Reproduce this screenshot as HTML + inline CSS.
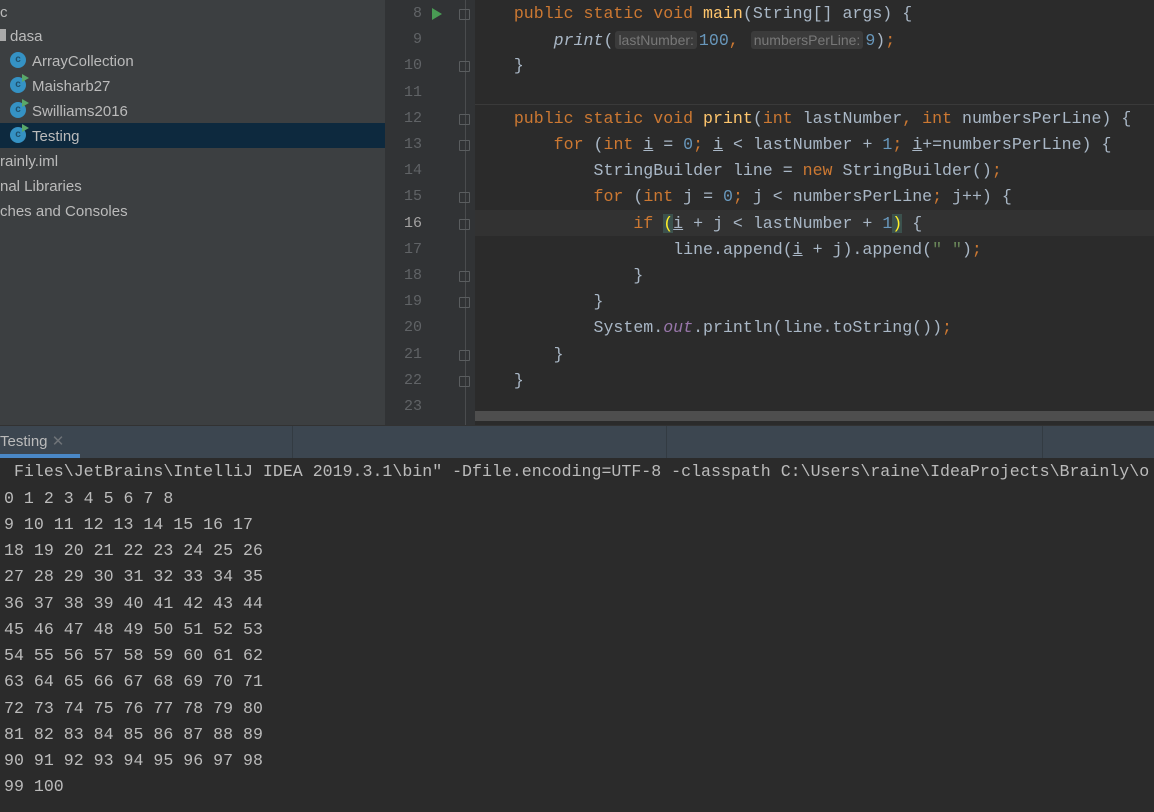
<!DOCTYPE html>
<html><head><meta charset="utf-8"><style>
*{margin:0;padding:0;box-sizing:border-box}
body{width:1154px;height:812px;overflow:hidden;background:#2b2b2b;position:relative;font-family:"Liberation Sans",sans-serif}
#side{position:absolute;left:0;top:0;width:385px;height:425px;background:#3c3f41;color:#bbbbbb;font-size:15px}
.si{position:absolute;height:25px;line-height:25px;white-space:nowrap}
.ci{display:inline-block;width:16px;height:16px;border-radius:50%;background:#3592c4;color:#1f4f6b;font-size:10px;font-weight:bold;text-align:center;line-height:16px;vertical-align:middle;margin-right:6px;position:relative;top:-2px}
.ci.r::after{content:"";position:absolute;right:-3px;top:-3px;border-left:7px solid #59a869;border-top:4px solid transparent;border-bottom:4px solid transparent}
#gut{position:absolute;left:385px;top:0;width:90px;height:425px;background:#313335}
#code{position:absolute;left:475px;top:0;width:679px;height:425px;background:#2b2b2b}
.ln{position:absolute;left:385px;width:37px;text-align:right;color:#606366;font-family:"Liberation Mono",monospace;font-size:15px;height:26px;line-height:26px}
.cl{position:absolute;left:474px;white-space:pre;font-family:"Liberation Mono",monospace;font-size:16.6px;color:#a9b7c6;height:26px;line-height:26px}
.k{color:#cc7832}.m{color:#ffc66d}.n{color:#6897bb}.s{color:#6a8759}.o{color:#9876aa;font-style:italic}.it{font-style:italic}
.h{font-family:"Liberation Sans",sans-serif;font-size:14px;color:#787878;background:#3b3b3b;border-radius:3px;padding:1px 3px;margin:0 2px}
.u{text-decoration:underline}
.fold{position:absolute;left:459px;width:11px;height:11px;border:1px solid #5a5d5f;border-radius:1px}
#tabs{position:absolute;left:0;top:425px;width:1154px;height:33px;background:#3c4650;border-top:1px solid #323232}
#con{position:absolute;left:0;top:458px;width:1154px;height:354px;background:#2b2b2b}
.cn{position:absolute;white-space:pre;font-family:"Liberation Mono",monospace;font-size:16.6px;color:#bbbbbb;height:26px;line-height:26px}
</style></head><body>
<div id="side">
<div class="si" style="left:0;top:0">c</div>
<div class="si" style="left:0;top:24px"><span style="display:inline-block;width:6px;height:12px;background:#aaa;vertical-align:middle;margin-right:4px;position:relative;top:-2px"></span>dasa</div>
<div class="si" style="left:10px;top:49px"><span class="ci">c</span>ArrayCollection</div>
<div class="si" style="left:10px;top:74px"><span class="ci r">c</span>Maisharb27</div>
<div class="si" style="left:10px;top:99px"><span class="ci r">c</span>Swilliams2016</div>
<div style="position:absolute;left:0;top:123px;width:385px;height:25px;background:#0d293e"></div>
<div class="si" style="left:10px;top:124px"><span class="ci r">c</span>Testing</div>
<div class="si" style="left:0;top:149px">rainly.iml</div>
<div class="si" style="left:0;top:174px">nal Libraries</div>
<div class="si" style="left:0;top:199px">ches and Consoles</div>
</div>
<div id="gut"></div>
<div id="code"></div>
<div style="position:absolute;left:475px;top:210px;width:679px;height:26px;background:#323232"></div>
<div style="position:absolute;left:465px;top:0;width:1px;height:425px;background:#4a4c4e"></div>
<div style="position:absolute;left:475px;top:104px;width:679px;height:1px;background:#3a3a3a"></div>
<div style="position:absolute;left:475px;top:411px;width:679px;height:10px;background:#4e4e4e"></div>
<div style="position:absolute;left:432px;top:8px;border-left:10px solid #499c54;border-top:6px solid transparent;border-bottom:6px solid transparent"></div>

<div class="ln" style="top:1px">8</div>
<div class="ln" style="top:27px">9</div>
<div class="ln" style="top:53px">10</div>
<div class="ln" style="top:80px">11</div>
<div class="ln" style="top:106px">12</div>
<div class="ln" style="top:132px">13</div>
<div class="ln" style="top:158px">14</div>
<div class="ln" style="top:184px">15</div>
<div class="ln" style="top:211px;color:#a4a3a3">16</div>
<div class="ln" style="top:237px">17</div>
<div class="ln" style="top:263px">18</div>
<div class="ln" style="top:289px">19</div>
<div class="ln" style="top:315px">20</div>
<div class="ln" style="top:342px">21</div>
<div class="ln" style="top:368px">22</div>
<div class="ln" style="top:394px">23</div>

<div class="fold" style="top:9px"></div><div class="fold" style="top:61px"></div>
<div class="fold" style="top:114px"></div><div class="fold" style="top:140px"></div>
<div class="fold" style="top:192px"></div><div class="fold" style="top:219px"></div>
<div class="fold" style="top:271px"></div><div class="fold" style="top:297px"></div>
<div class="fold" style="top:350px"></div><div class="fold" style="top:376px"></div>

<div class="cl" style="top:1px">    <span class="k">public static void </span><span class="m">main</span>(String[] args) {</div>
<div class="cl" style="top:27px">        <span class="it">print</span>(<span class="h">lastNumber:</span><span class="n">100</span><span class="k">, </span><span class="h">numbersPerLine:</span><span class="n">9</span>)<span class="k">;</span></div>
<div class="cl" style="top:53px">    }</div>
<div class="cl" style="top:106px">    <span class="k">public static void </span><span class="m">print</span>(<span class="k">int </span>lastNumber<span class="k">, int </span>numbersPerLine) {</div>
<div class="cl" style="top:132px">        <span class="k">for </span>(<span class="k">int </span><span class="u">i</span> = <span class="n">0</span><span class="k">; </span><span class="u">i</span> &lt; lastNumber + <span class="n">1</span><span class="k">; </span><span class="u">i</span>+=numbersPerLine) {</div>
<div class="cl" style="top:158px">            StringBuilder line = <span class="k">new </span>StringBuilder()<span class="k">;</span></div>
<div class="cl" style="top:184px">            <span class="k">for </span>(<span class="k">int </span>j = <span class="n">0</span><span class="k">; </span>j &lt; numbersPerLine<span class="k">; </span>j++) {</div>
<div class="cl" style="top:211px">                <span class="k">if </span><span style="background:#3b514d;color:#ffef28">(</span><span class="u">i</span> + j &lt; lastNumber + <span class="n">1</span><span style="background:#3b514d;color:#ffef28">)</span> {</div>
<div class="cl" style="top:237px">                    line.append(<span class="u">i</span> + j).append(<span class="s">" "</span>)<span class="k">;</span></div>
<div class="cl" style="top:263px">                }</div>
<div class="cl" style="top:289px">            }</div>
<div class="cl" style="top:315px">            System.<span class="o">out</span>.println(line.toString())<span class="k">;</span></div>
<div class="cl" style="top:342px">        }</div>
<div class="cl" style="top:368px">    }</div>

<div id="tabs">
<div style="position:absolute;left:0;top:6px;color:#bbbbbb;font-size:15px">Testing <span style="color:#6e7378">✕</span></div>
<div style="position:absolute;left:0;bottom:0;width:80px;height:4px;background:#4a88c7"></div>
<div style="position:absolute;left:292px;top:0;width:1px;height:33px;background:#333b42"></div>
<div style="position:absolute;left:666px;top:0;width:1px;height:33px;background:#333b42"></div>
<div style="position:absolute;left:1042px;top:0;width:1px;height:33px;background:#333b42"></div>
</div>
<div id="con"></div>
<div class="cn" style="left:4px;top:459px"> Files\JetBrains\IntelliJ IDEA 2019.3.1\bin" -Dfile.encoding=UTF-8 -classpath C:\Users\raine\IdeaProjects\Brainly\o</div>
<div class="cn" style="left:4px;top:486px">0 1 2 3 4 5 6 7 8</div>
<div class="cn" style="left:4px;top:512px">9 10 11 12 13 14 15 16 17</div>
<div class="cn" style="left:4px;top:538px">18 19 20 21 22 23 24 25 26</div>
<div class="cn" style="left:4px;top:564px">27 28 29 30 31 32 33 34 35</div>
<div class="cn" style="left:4px;top:591px">36 37 38 39 40 41 42 43 44</div>
<div class="cn" style="left:4px;top:617px">45 46 47 48 49 50 51 52 53</div>
<div class="cn" style="left:4px;top:643px">54 55 56 57 58 59 60 61 62</div>
<div class="cn" style="left:4px;top:669px">63 64 65 66 67 68 69 70 71</div>
<div class="cn" style="left:4px;top:696px">72 73 74 75 76 77 78 79 80</div>
<div class="cn" style="left:4px;top:722px">81 82 83 84 85 86 87 88 89</div>
<div class="cn" style="left:4px;top:748px">90 91 92 93 94 95 96 97 98</div>
<div class="cn" style="left:4px;top:774px">99 100</div>
</body></html>
